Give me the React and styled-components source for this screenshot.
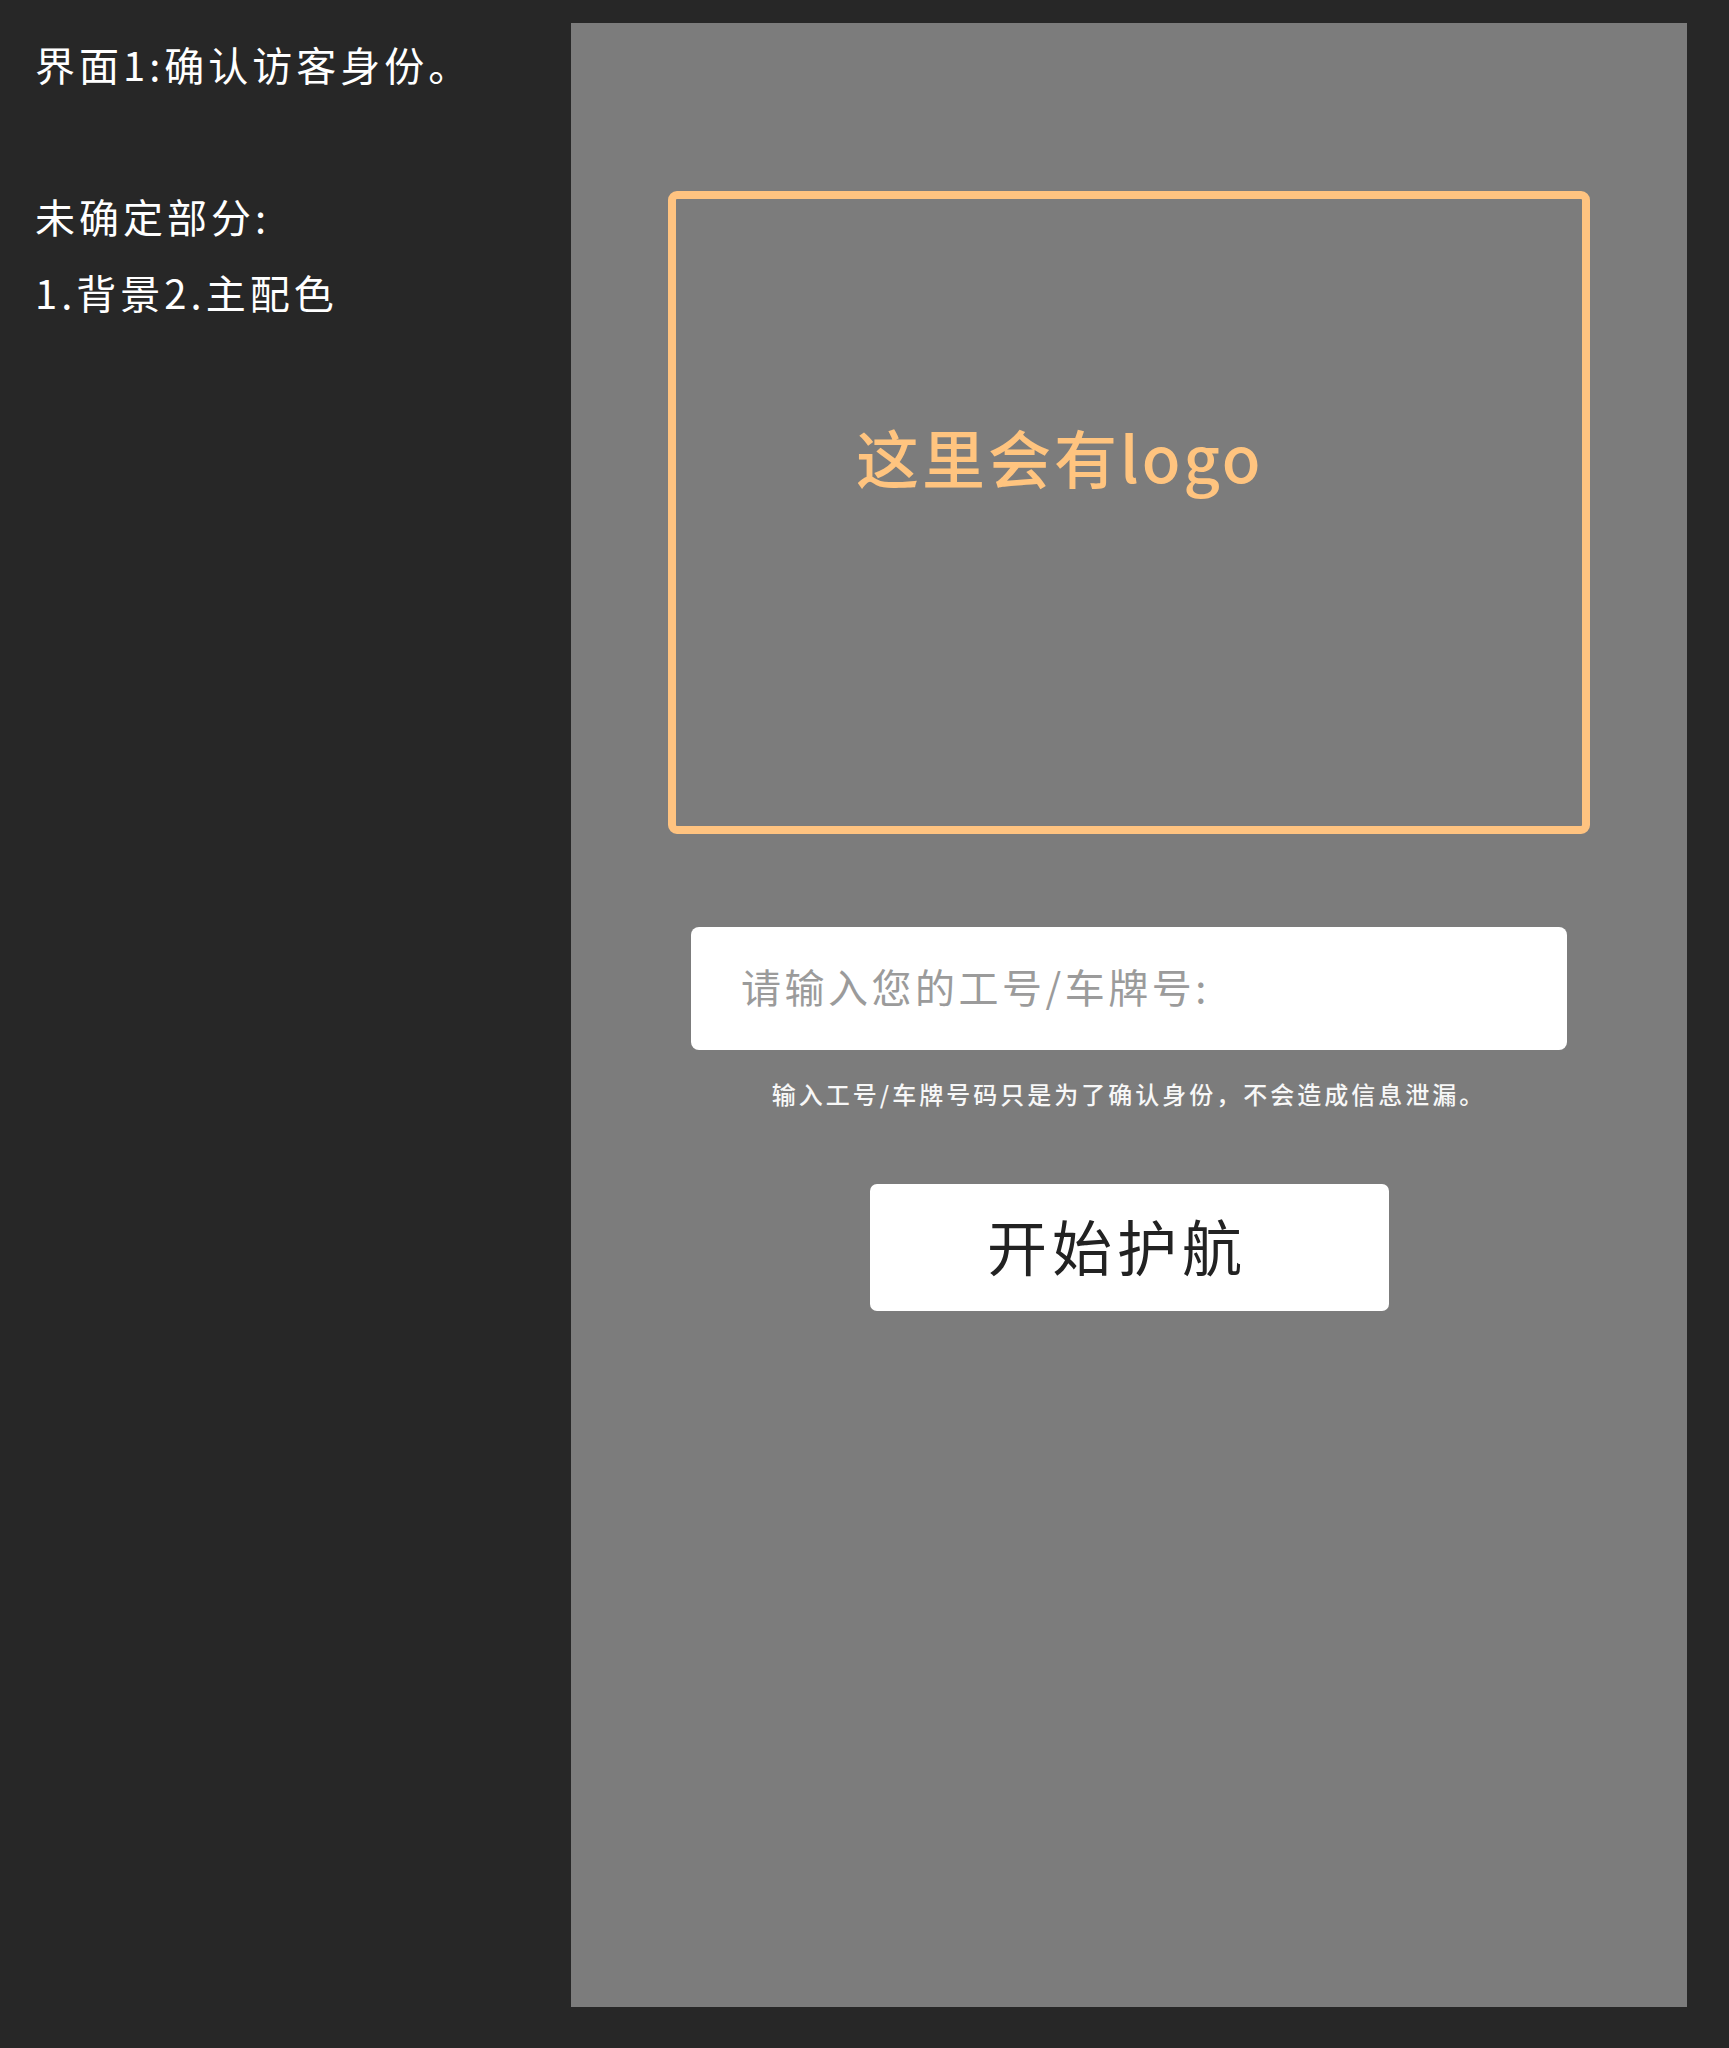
import React from "react";
import styled, { createGlobalStyle } from "styled-components";

const Global = createGlobalStyle`
  html, body { margin: 0; padding: 0; background: #272727; }
  body { font-family: "Noto Sans CJK SC", "Noto Sans", sans-serif; }
  * { box-sizing: border-box; }
`;

const Page = styled.div`
  display: flex;
  align-items: flex-start;
  width: 1729px;
  min-height: 2048px;
  background: #272727;
`;

const Notes = styled.div`
  width: 571px;
  padding: 26px 0 0 35px;
  color: #ffffff;
  font-size: 40px;
  line-height: 76px;
  letter-spacing: 4px;
  font-weight: 400;
`;

const NoteLine = styled.div`
  height: 76px;
  white-space: nowrap;
`;

const Panel = styled.div`
  margin-top: 23px;
  width: 1116px;
  height: 1984px;
  background: #7c7c7c;
  display: flex;
  flex-direction: column;
  align-items: center;
  padding-top: 168px;
`;

const LogoBox = styled.div`
  width: 922px;
  height: 643px;
  border: 8px solid #ffc380;
  border-radius: 9px;
  padding: 225px 0 0 180px;
`;

const LogoText = styled.div`
  color: #ffc47f;
  font-size: 63px;
  line-height: 63px;
  letter-spacing: 3px;
  font-weight: 500;
  white-space: nowrap;
`;

const InputBox = styled.div`
  margin-top: 93px;
  width: 876px;
  height: 123px;
  background: #ffffff;
  border-radius: 8px;
  display: flex;
  align-items: center;
  padding: 0 0 6px 50px;
`;

const Placeholder = styled.span`
  color: #9b9b9b;
  font-size: 40px;
  letter-spacing: 3.5px;
  font-weight: 400;
`;

const Helper = styled.div`
  margin-top: 28px;
  color: #f7f7f7;
  font-size: 24px;
  line-height: 32px;
  letter-spacing: 3px;
  font-weight: 500;
  white-space: nowrap;
`;

const StartButton = styled.button`
  margin-top: 74px;
  width: 519px;
  height: 127px;
  background: #ffffff;
  border: none;
  border-radius: 7px;
  display: flex;
  align-items: center;
  justify-content: center;
  padding: 0 24px 7px 0;
  color: #222222;
  font-family: "Noto Sans CJK SC", "Noto Sans", sans-serif;
  font-size: 60px;
  letter-spacing: 5px;
  font-weight: 400;
`;

export default function App() {
  return (
    <>
      <Global />
      <Page>
        <Notes>
          <NoteLine>界面1:确认访客身份。</NoteLine>
          <NoteLine />
          <NoteLine>未确定部分:</NoteLine>
          <NoteLine>1.背景2.主配色</NoteLine>
        </Notes>
        <Panel>
          <LogoBox>
            <LogoText>这里会有logo</LogoText>
          </LogoBox>
          <InputBox>
            <Placeholder>请输入您的工号/车牌号:</Placeholder>
          </InputBox>
          <Helper>输入工号/车牌号码只是为了确认身份，不会造成信息泄漏。</Helper>
          <StartButton>开始护航</StartButton>
        </Panel>
      </Page>
    </>
  );
}
